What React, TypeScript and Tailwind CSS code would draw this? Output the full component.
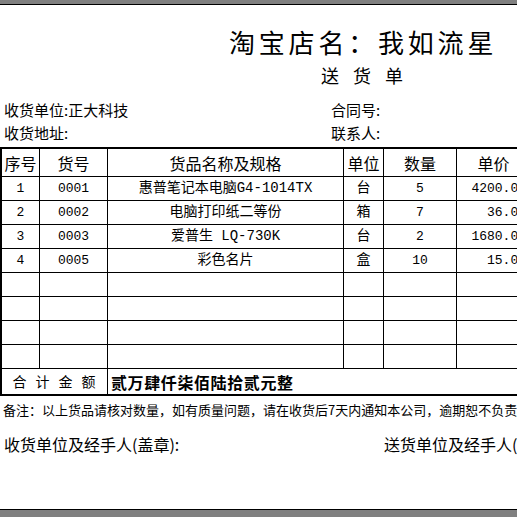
import React from "react";

const CJK = { fontFamily: '"Noto Sans CJK SC", sans-serif' };
const MONO = { fontFamily: '"Liberation Mono", "Noto Sans CJK SC", monospace' };

const widths = [38, 68, 236, 40, 73, 74, 100];

type Row = [string, string, string, string, string, string];

const rows: Row[] = [
  ["1", "0001", "惠普笔记本电脑G4-1014TX", "台", "5", "4200.00"],
  ["2", "0002", "电脑打印纸二等份", "箱", "7", "36.00"],
  ["3", "0003", "爱普生 LQ-730K", "台", "2", "1680.00"],
  ["4", "0005", "彩色名片", "盒", "10", "15.00"],
  ["", "", "", "", "", ""],
  ["", "", "", "", "", ""],
  ["", "", "", "", "", ""],
  ["", "", "", "", "", ""],
];

export default function App() {
  return (
    <div className="w-[517px] h-[517px] overflow-hidden bg-white flex flex-col text-black" style={CJK}>
      <div className="h-[4px] bg-[#808080] shrink-0" />
      <div className="h-[1px] bg-black shrink-0" />
      <div className="flex-1 flex flex-col min-h-0">
        <div className="mt-[22px] pl-[229px] text-[26px] leading-[30px] tracking-[3.8px] whitespace-nowrap">
          淘宝店名：我如流星
        </div>
        <div className="mt-[6px] pl-[321px] text-[18px] leading-[24px] tracking-[14px] whitespace-nowrap">
          送货单
        </div>
        <div className="mt-[12px] px-[4px] flex text-[15px] leading-[22px] whitespace-nowrap">
          <span className="w-[327px] shrink-0">收货单位:正大科技</span>
          <span>合同号:</span>
        </div>
        <div className="mt-[1px] px-[4px] flex text-[15px] leading-[22px] whitespace-nowrap">
          <span className="w-[327px] shrink-0">收货地址:</span>
          <span>联系人:</span>
        </div>
        <div className="mt-[3px] w-[700px] border-l-2 border-t-2 border-b-2 border-black shrink-0">
          <div className="flex h-[28px] border-b border-black text-[16px]">
            {["序号", "货号", "货品名称及规格", "单位", "数量", "单价", "金额"].map((h, i) => (
              <div
                key={i}
                className="border-r border-black flex items-center justify-center shrink-0 whitespace-nowrap"
                style={{ width: widths[i] }}
              >
                {h}
              </div>
            ))}
          </div>
          {rows.map((r, ri) => (
            <div key={ri} className="flex h-[24px] border-b border-black text-[13px]" style={MONO}>
              {r.map((c, i) => (
                <div
                  key={i}
                  className={
                    "border-r border-black flex items-center shrink-0 whitespace-nowrap " +
                    (i === 5 ? "justify-end pr-[4px]" : "justify-center") +
                    (i === 2 || i === 3 ? " text-[14px]" : "")
                  }
                  style={{ width: widths[i] }}
                >
                  {c}
                </div>
              ))}
              <div className="border-r border-black shrink-0" style={{ width: widths[6] }} />
            </div>
          ))}
          <div className="flex h-[25px] items-stretch">
            <div className="w-[106px] border-r border-black flex items-center justify-center text-[14px] tracking-[9px] pl-[8px] shrink-0 whitespace-nowrap">
              合计金额
            </div>
            <div className="flex items-center pl-[3px] text-[16px] font-bold tracking-[0.6px] whitespace-nowrap">
              贰万肆仟柒佰陆拾贰元整
            </div>
          </div>
        </div>
        <div className="mt-[5px] pl-[3px] text-[13px] leading-[18px] whitespace-nowrap">
          备注：以上货品请核对数量，如有质量问题，请在收货后7天内通知本公司，逾期恕不负责。
        </div>
        <div className="mt-[14px] px-[4px] flex text-[16px] leading-[22px] whitespace-nowrap">
          <span className="w-[380px] shrink-0">收货单位及经手人(盖章):</span>
          <span>送货单位及经手人(盖章):</span>
        </div>
      </div>
      <div className="h-[1px] bg-black shrink-0" />
      <div className="h-[7px] bg-[#808080] shrink-0" />
    </div>
  );
}
